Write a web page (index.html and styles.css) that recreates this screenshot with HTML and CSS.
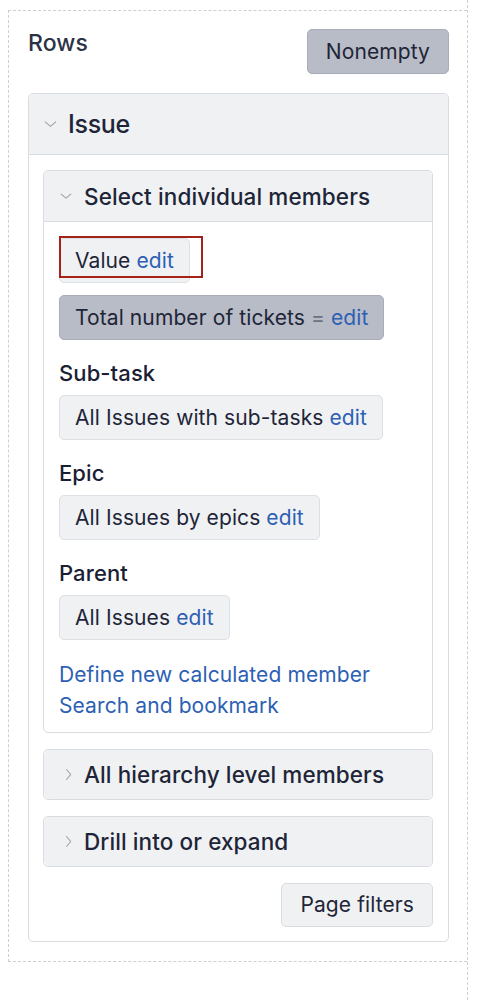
FILE: index.html
```html
<!DOCTYPE html>
<html>
<head>
<meta charset="utf-8">
<link rel="stylesheet" href="styles.css">
</head>
<body>
<div class="grid">
  <div class="cell">
    <div class="cell-head">
      <div class="cell-title">Rows</div>
      <button class="btn btn-dark">Nonempty</button>
    </div>
    <div class="panel">
      <div class="panel-head panel-head-lg">
        <svg class="chev" viewBox="0 0 14 8"><path d="M1 1.5 L7 6.5 L13 1.5" fill="none" stroke="#9aa0ab" stroke-width="1.2"/></svg>
        <span>Issue</span>
      </div>
      <div class="panel-body">
        <div class="panel">
          <div class="panel-head">
            <svg class="chev" viewBox="0 0 14 8"><path d="M1 1.5 L7 6.5 L13 1.5" fill="none" stroke="#9aa0ab" stroke-width="1.2"/></svg>
            <span>Select individual members</span>
          </div>
          <div class="panel-body members">
            <div class="chip-wrap">
              <span class="chip">Value <a class="edit">edit</a></span>
              <span class="marker"></span>
            </div>
            <div><span class="chip chip-dark">Total number of tickets <span class="eq">=</span> <a class="edit">edit</a></span></div>
            <div class="group">
              <div class="label">Sub-task</div>
              <span class="chip">All Issues with sub-tasks <a class="edit">edit</a></span>
            </div>
            <div class="group">
              <div class="label">Epic</div>
              <span class="chip">All Issues by epics <a class="edit">edit</a></span>
            </div>
            <div class="group">
              <div class="label">Parent</div>
              <span class="chip">All Issues <a class="edit">edit</a></span>
            </div>
            <div class="links">
              <a class="link">Define new calculated member</a>
              <a class="link">Search and bookmark</a>
            </div>
          </div>
        </div>
        <div class="panel">
          <div class="panel-head panel-head-closed">
            <svg class="chev chev-r" viewBox="0 0 8 14"><path d="M1.5 1 L6.5 7 L1.5 13" fill="none" stroke="#9aa0ab" stroke-width="1.2"/></svg>
            <span>All hierarchy level members</span>
          </div>
        </div>
        <div class="panel">
          <div class="panel-head panel-head-closed">
            <svg class="chev chev-r" viewBox="0 0 8 14"><path d="M1.5 1 L6.5 7 L1.5 13" fill="none" stroke="#9aa0ab" stroke-width="1.2"/></svg>
            <span>Drill into or expand</span>
          </div>
        </div>
        <div class="footer">
          <button class="btn btn-light">Page filters</button>
        </div>
      </div>
    </div>
  </div>
</div>
</body>
</html>
```

FILE: styles.css
```css
* { box-sizing: border-box; }
html, body { margin: 0; padding: 0; background: #fff; }
body {
  font-family: Inter, "Noto Sans", "Liberation Sans", sans-serif;
  color: #1e2538;
  font-size: 21px;
  letter-spacing: 0.1px;
}
.grid {
  margin-left: 8px;
  width: 460px;
  min-height: 1000px;
  padding-top: 10px;
  border-right: 1px dashed #cfcfcf;
}
.cell {
  border-top: 1px dashed #cfcfcf;
  border-left: 1px dashed #cfcfcf;
  border-bottom: 1px dashed #cfcfcf;
  padding: 18px 18px 19px 19px;
}
.cell-head {
  display: flex;
  justify-content: space-between;
  align-items: flex-start;
  margin-bottom: 19px;
}
.cell-title {
  font-size: 23px;
  font-weight: 500;
  line-height: 28px;
  color: #2c3345;
}
.btn {
  font-family: inherit;
  font-size: 21px;
  letter-spacing: 0.1px;
  color: #1e2538;
  border-radius: 5px;
  line-height: 29px;
}
.btn-dark {
  background: #b8bcc6;
  border: 1px solid #a8adb8;
  padding: 7px 18px;
}
.btn-light {
  background: #f0f1f3;
  border: 1px solid #d9dce1;
  padding: 6px 18px;
  line-height: 30px;
}
.panel {
  border: 1px solid #d9dce1;
  border-radius: 5px;
  background: #fff;
}
.panel-head {
  display: flex;
  align-items: center;
  background: #f0f1f3;
  border-bottom: 1px solid #d9dce1;
  border-radius: 5px 5px 0 0;
  height: 51px;
  padding-left: 16px;
  font-size: 22.5px;
  font-weight: 500;
  color: #1e2538;
}
.panel-head-lg {
  height: 61px;
  padding-left: 15px;
  font-size: 25px;
  letter-spacing: -0.3px;
}
.panel-head-closed {
  border-bottom: none;
  border-radius: 5px;
  height: 49px;
}
.chev {
  width: 12px;
  height: 8px;
  margin-right: 12px;
  flex: none;
}
.panel-head-lg .chev { width: 13px; margin-right: 11px; }
.chev-r {
  width: 7px;
  height: 13px;
  margin-right: 12px;
  margin-left: 5px;
}
.panel-body {
  padding: 15px 15px 14px 14px;
  display: flex;
  flex-direction: column;
  gap: 16px;
}
.panel-body.members {
  padding: 16px 15px 11px 15px;
  gap: 12px;
}
.chip-wrap {
  position: relative;
  align-self: flex-start;
}
.chip {
  display: inline-block;
  background: #f0f1f3;
  border: 1px solid #dcdfe3;
  border-radius: 5px;
  padding: 7px 15px;
  line-height: 29px;
  white-space: nowrap;
}
.chip-dark {
  background: #b8bcc6;
  border-color: #a8adb8;
}
.marker {
  position: absolute;
  left: 0;
  top: -2px;
  width: 144px;
  height: 42px;
  border: 2px solid #a3231b;
}
.eq { color: #6b7280; }
.edit, .link { color: #2d5fb4; text-decoration: none; }
.group { margin-top: 6px; }
.label {
  font-weight: 500;
  font-size: 22px;
  line-height: 30px;
  margin-bottom: 7px;
  color: #1a2033;
}
.links {
  display: flex;
  flex-direction: column;
  line-height: 31px;
  margin-top: 7px;
}
.footer {
  display: flex;
  justify-content: flex-end;
}
```
